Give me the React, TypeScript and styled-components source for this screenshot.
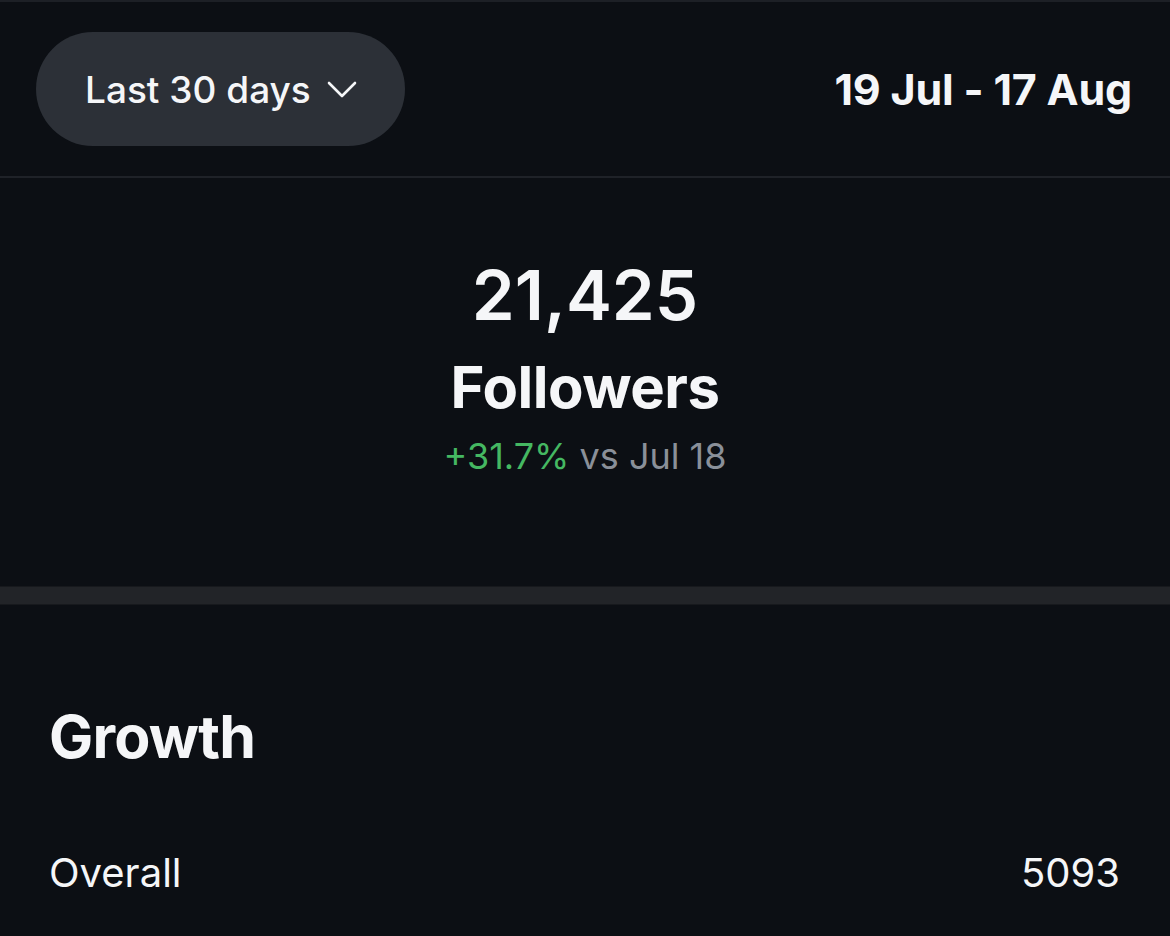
import { FC } from "react";
import styled, { createGlobalStyle } from "styled-components";

const GlobalStyle = createGlobalStyle`
  html, body {
    margin: 0;
    padding: 0;
    background: #0c0f14;
  }
  body {
    font-family: Inter, "Noto Sans", "Liberation Sans", sans-serif;
    color: #f5f6f8;
    -webkit-font-smoothing: antialiased;
  }
  * {
    box-sizing: border-box;
  }
`;

const App: FC = () => {
  return (
    <>
      <GlobalStyle />
      <Page>
        <Header>
          <RangeButton type="button">
            Last 30 days
            <svg width="30" height="18" viewBox="0 0 30 18" fill="none">
              <polyline
                points="2,2 15,15 28,2"
                stroke="#f5f6f8"
                strokeWidth="2.6"
                strokeLinecap="round"
                strokeLinejoin="round"
              />
            </svg>
          </RangeButton>
          <DateRange>19 Jul - 17 Aug</DateRange>
        </Header>

        <Summary>
          <Total>21,425</Total>
          <TotalLabel>Followers</TotalLabel>
          <Change>
            <Delta>+31.7%</Delta> vs Jul 18
          </Change>
        </Summary>

        <SectionDivider />

        <Growth>
          <SectionTitle>Growth</SectionTitle>
          <StatRow>
            <StatLabel>Overall</StatLabel>
            <StatValue>5093</StatValue>
          </StatRow>
        </Growth>
      </Page>
    </>
  );
};

const Page = styled.div`
  width: 1170px;
  height: 936px;
  overflow: hidden;
  border-top: 2px solid #1d2026;
  background: #0c0f14;
`;

const Header = styled.header`
  height: 176px;
  display: flex;
  align-items: center;
  justify-content: space-between;
  padding: 0 38px 0 36px;
  border-bottom: 2px solid #1f2228;
`;

const RangeButton = styled.button`
  height: 114px;
  width: 369px;
  border: none;
  border-radius: 57px;
  background: #2c3037;
  color: #f5f6f8;
  font-family: inherit;
  font-size: 37px;
  font-weight: 500;
  display: flex;
  align-items: center;
  justify-content: flex-start;
  gap: 16px;
  padding: 0 0 0 49px;
  cursor: pointer;

  svg {
    margin-top: 2px;
  }
`;

const DateRange = styled.div`
  font-size: 43px;
  font-weight: 700;
  color: #f5f6f8;
  letter-spacing: -0.2px;
`;

const Summary = styled.section`
  height: 408px;
  display: flex;
  flex-direction: column;
  align-items: center;
  padding-top: 76px;
`;

const Total = styled.div`
  font-size: 69px;
  font-weight: 600;
  line-height: 82px;
`;

const TotalLabel = styled.div`
  margin-top: 16px;
  font-size: 58px;
  font-weight: 700;
  line-height: 70px;
  letter-spacing: -0.5px;
`;

const Change = styled.div`
  margin-top: 13px;
  font-size: 36px;
  font-weight: 400;
  line-height: 42px;
  color: #8a9099;
`;

const Delta = styled.span`
  color: #45b862;
`;

const SectionDivider = styled.div`
  height: 19px;
  background: #222428;
  border-top: 1px solid #17191d;
  border-bottom: 1px solid #17191d;
`;

const Growth = styled.section`
  padding: 96px 50px 0 49px;
`;

const SectionTitle = styled.h2`
  margin: 0;
  font-size: 59px;
  font-weight: 700;
  line-height: 72px;
  letter-spacing: -0.8px;
`;

const StatRow = styled.div`
  margin-top: 76px;
  display: flex;
  justify-content: space-between;
  align-items: baseline;
  font-size: 40px;
  line-height: 48px;
`;

const StatLabel = styled.span`
  font-weight: 400;
`;

const StatValue = styled.span`
  font-weight: 400;
`;

export default App;
